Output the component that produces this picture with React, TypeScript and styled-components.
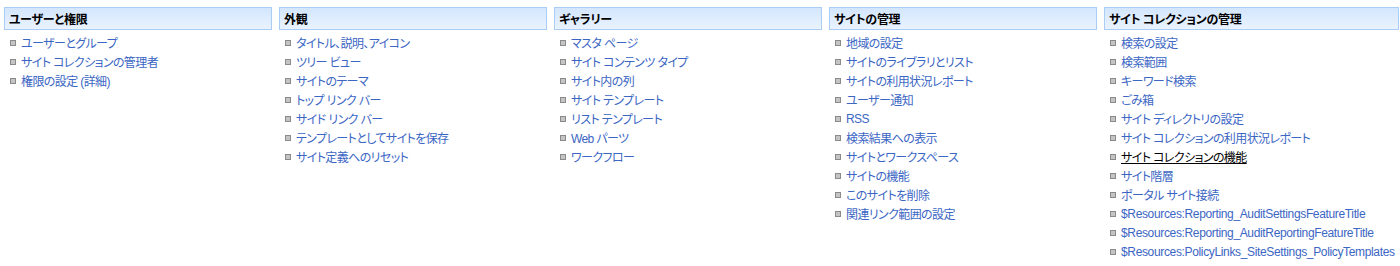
import styled, { createGlobalStyle } from 'styled-components';

const GlobalStyle = createGlobalStyle`
  html, body {
    margin: 0;
    padding: 0;
    background: #ffffff;
  }
  body {
    font-family: "Noto Sans CJK JP", "Liberation Sans", sans-serif;
    font-size: 12px;
  }
`;

const Page = styled.div`
  display: flex;
  align-items: flex-start;
  gap: 7px;
  padding: 7px 1px 0 4px;
  height: 266px;
  box-sizing: border-box;
`;

const Column = styled.div<{ $wide?: boolean }>`
  display: flex;
  flex-direction: column;
  width: ${({ $wide }) => ($wide ? 'auto' : '268px')};
  flex: ${({ $wide }) => ($wide ? '1' : 'none')};
`;

const Header = styled.div`
  height: 21px;
  display: flex;
  align-items: center;
  padding: 0 4px;
  border: 1px solid #aacdf6;
  background: linear-gradient(to bottom, #d3e6fd 0%, #eaf3ff 100%);
  font-family: "Noto Sans CJK JP", sans-serif;
  font-feature-settings: "palt";
  font-weight: 700;
  font-size: 12px;
  letter-spacing: -0.3px;
  color: #000000;
`;

const List = styled.ul`
  list-style: none;
  margin: 0;
  padding: 3px 0 0 6px;
  display: flex;
  flex-direction: column;
`;

const Item = styled.li`
  height: 19px;
  display: flex;
  align-items: center;
  gap: 5px;
`;

const Bullet = styled.span`
  width: 4px;
  height: 4px;
  border: 1px solid #8a8a8a;
  background: #c4c4c4;
  flex: none;
`;

const Link = styled.a<{ $active?: boolean; $latin?: boolean }>`
  font-family: "Liberation Sans", "Noto Sans CJK JP", sans-serif;
  font-feature-settings: "palt";
  font-size: 12px;
  color: ${({ $active }) => ($active ? '#000000' : '#3b66c4')};
  text-decoration: ${({ $active }) => ($active ? 'underline' : 'none')};
  white-space: nowrap;
  letter-spacing: ${({ $latin }) => ($latin ? '-0.35px' : '-0.6px')};
`;

interface Section {
  title: string;
  links: string[];
  wide?: boolean;
}

const sections: Section[] = [
  {
    title: 'ユーザーと権限',
    links: ['ユーザーとグループ', 'サイト コレクションの管理者', '権限の設定 (詳細)'],
  },
  {
    title: '外観',
    links: [
      'タイトル、説明、アイコン',
      'ツリー ビュー',
      'サイトのテーマ',
      'トップ リンク バー',
      'サイド リンク バー',
      'テンプレートとしてサイトを保存',
      'サイト定義へのリセット',
    ],
  },
  {
    title: 'ギャラリー',
    links: [
      'マスタ ページ',
      'サイト コンテンツ タイプ',
      'サイト内の列',
      'サイト テンプレート',
      'リスト テンプレート',
      'Web パーツ',
      'ワークフロー',
    ],
  },
  {
    title: 'サイトの管理',
    links: [
      '地域の設定',
      'サイトのライブラリとリスト',
      'サイトの利用状況レポート',
      'ユーザー通知',
      'RSS',
      '検索結果への表示',
      'サイトとワークスペース',
      'サイトの機能',
      'このサイトを削除',
      '関連リンク範囲の設定',
    ],
  },
  {
    title: 'サイト コレクションの管理',
    wide: true,
    links: [
      '検索の設定',
      '検索範囲',
      'キーワード検索',
      'ごみ箱',
      'サイト ディレクトリの設定',
      'サイト コレクションの利用状況レポート',
      'サイト コレクションの機能',
      'サイト階層',
      'ポータル サイト接続',
      '$Resources:Reporting_AuditSettingsFeatureTitle',
      '$Resources:Reporting_AuditReportingFeatureTitle',
      '$Resources:PolicyLinks_SiteSettings_PolicyTemplates',
    ],
  },
];

const ACTIVE = 'サイト コレクションの機能';

export default function App() {
  return (
    <>
      <GlobalStyle />
      <Page>
        {sections.map((s) => (
          <Column key={s.title} $wide={s.wide}>
            <Header>{s.title}</Header>
            <List>
              {s.links.map((l) => (
                <Item key={l}>
                  <Bullet />
                  <Link href="#" $active={l === ACTIVE} $latin={l.startsWith('$')}>
                    {l}
                  </Link>
                </Item>
              ))}
            </List>
          </Column>
        ))}
      </Page>
    </>
  );
}
